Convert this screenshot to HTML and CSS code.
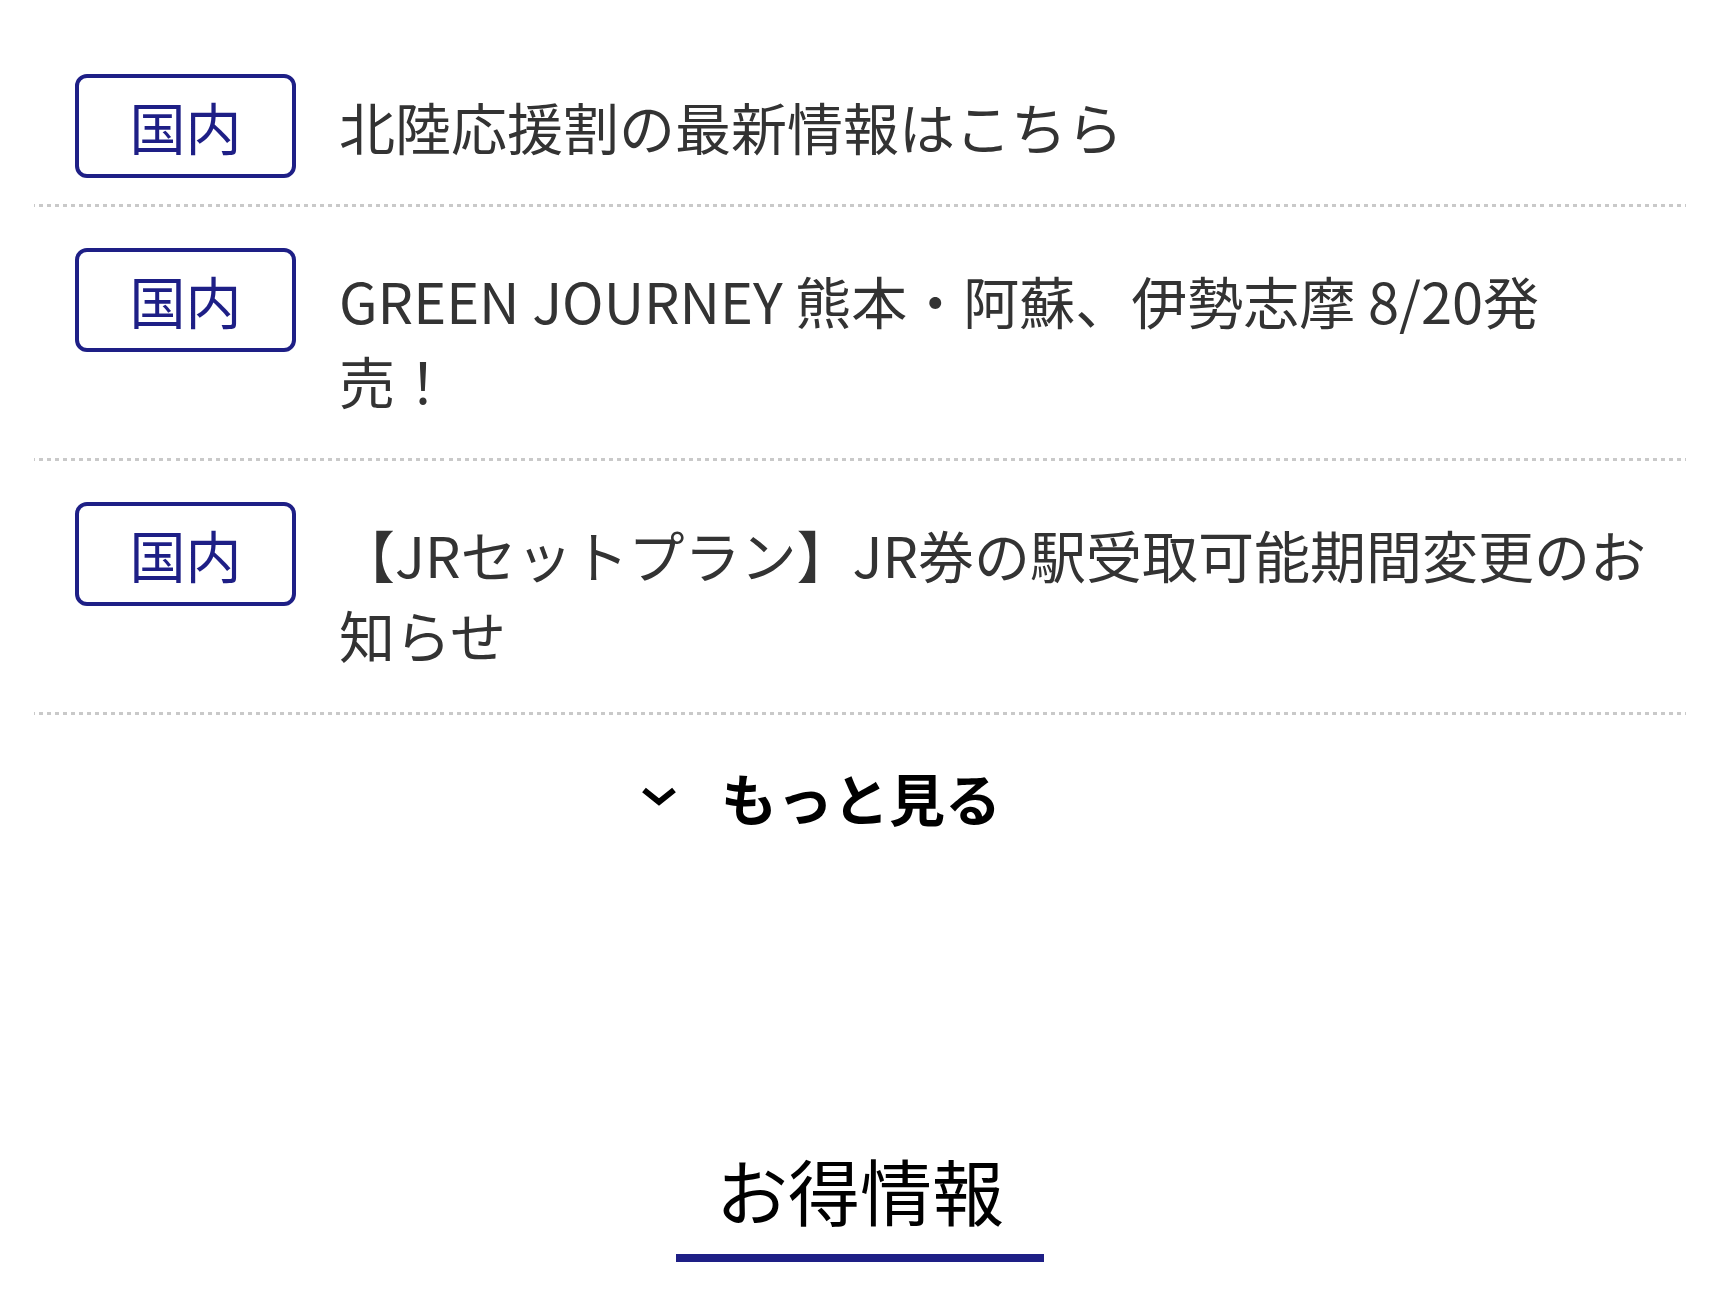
FILE: index.html
```html
<!DOCTYPE html>
<html lang="ja">
<head>
    <meta charset="UTF-8">
    <title>お知らせ</title>
    <link rel="stylesheet" href="styles.css">
</head>
<body>
<div id="wrap">
    <ul class="news_list">
        <li>
            <a href="">
                <span class="tag">国内</span>
                <span class="txt">北陸応援割の最新情報はこちら</span>
            </a>
        </li>
        <li>
            <a href="">
                <span class="tag">国内</span>
                <span class="txt">GREEN JOURNEY 熊本・阿蘇、伊勢志摩 8/20発売！</span>
            </a>
        </li>
        <li>
            <a href="">
                <span class="tag">国内</span>
                <span class="txt">【JRセットプラン】JR券の駅受取可能期間変更のお知らせ</span>
            </a>
        </li>
    </ul>
    <div class="more">
        <a href="" class="more_btn">
            <svg class="arrow" width="36" height="20" viewBox="0 0 36 20">
                <polyline points="3,3 18,15 33,3" fill="none" stroke="#000" stroke-width="6"></polyline>
            </svg>
            <span>もっと見る</span>
        </a>
    </div>
    <h2 class="sec_title">お得情報</h2>
</div>
</body>
</html>
```

FILE: styles.css
```css
body, div, ul, li, a, span, h2 {
    margin: 0;
    padding: 0;
}

ul, li {
    list-style-type: none;
}

a {
    text-decoration: none;
    color: inherit;
}

body {
    background-color: #fff;
    font-family: "Noto Sans CJK JP", "Noto Sans", sans-serif;
    color: #333;
}

#wrap {
    padding: 33px 34px 0;
}

.news_list li {
    padding: 41px 39px 26px 41px;
    border-bottom: 3px solid transparent;
    border-image: repeating-linear-gradient(to right, #c9c9c9 0, #c9c9c9 4px, transparent 4px, transparent 8px) 3;
}

.news_list li a {
    display: flex;
    align-items: flex-start;
    gap: 43px;
}

.news_list .tag {
    flex: none;
    display: flex;
    align-items: center;
    justify-content: center;
    box-sizing: border-box;
    width: 221px;
    height: 104px;
    border: 4px solid #1e1f86;
    border-radius: 12px;
    font-size: 56px;
    line-height: 1;
    color: #1e1f86;
}

.news_list .txt {
    flex: 1;
    padding: 12px 0;
    font-size: 56px;
    line-height: 80px;
    color: #333;
}

.more {
    margin-top: 42px;
    text-align: center;
}

.more_btn {
    display: inline-flex;
    align-items: center;
    gap: 44px;
    padding-right: 78px;
    font-size: 56px;
    line-height: 80px;
    font-weight: bold;
    color: #000;
}

.more_btn .arrow {
    display: block;
}

.sec_title {
    margin-top: 301px;
    font-size: 72px;
    line-height: 101px;
    font-weight: normal;
    color: #000;
    text-align: center;
}

.sec_title::after {
    content: "";
    display: block;
    width: 368px;
    height: 8px;
    margin: 15px auto 0;
    background-color: #1e1f86;
}
```
